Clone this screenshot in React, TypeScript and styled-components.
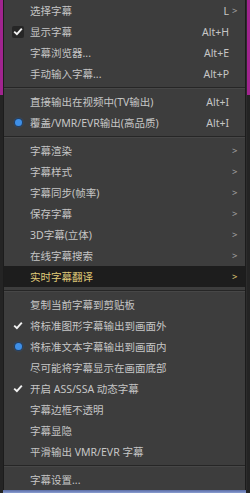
import styled, { createGlobalStyle } from 'styled-components';

type Entry =
  | { kind: 'sep' }
  | {
      kind: 'item';
      label: string;
      shortcut?: string;
      submenu?: boolean;
      mark?: 'check' | 'boxcheck' | 'radio';
      active?: boolean;
    };

const entries: Entry[] = [
  { kind: 'item', label: '选择字幕', shortcut: 'L', submenu: true },
  { kind: 'item', label: '显示字幕', shortcut: 'Alt+H', mark: 'boxcheck' },
  { kind: 'item', label: '字幕浏览器...', shortcut: 'Alt+E' },
  { kind: 'item', label: '手动输入字幕...', shortcut: 'Alt+P' },
  { kind: 'sep' },
  { kind: 'item', label: '直接输出在视频中(TV输出)', shortcut: 'Alt+I' },
  { kind: 'item', label: '覆盖/VMR/EVR输出(高品质)', shortcut: 'Alt+I', mark: 'radio' },
  { kind: 'sep' },
  { kind: 'item', label: '字幕渲染', submenu: true },
  { kind: 'item', label: '字幕样式', submenu: true },
  { kind: 'item', label: '字幕同步(帧率)', submenu: true },
  { kind: 'item', label: '保存字幕', submenu: true },
  { kind: 'item', label: '3D字幕(立体)', submenu: true },
  { kind: 'item', label: '在线字幕搜索', submenu: true },
  { kind: 'item', label: '实时字幕翻译', submenu: true, active: true },
  { kind: 'sep' },
  { kind: 'item', label: '复制当前字幕到剪贴板' },
  { kind: 'item', label: '将标准图形字幕输出到画面外', mark: 'check' },
  { kind: 'item', label: '将标准文本字幕输出到画面内', mark: 'radio' },
  { kind: 'item', label: '尽可能将字幕显示在画面底部' },
  { kind: 'item', label: '开启 ASS/SSA 动态字幕', mark: 'check' },
  { kind: 'item', label: '字幕边框不透明' },
  { kind: 'item', label: '字幕显隐' },
  { kind: 'item', label: '平滑输出 VMR/EVR 字幕' },
  { kind: 'sep' },
  { kind: 'item', label: '字幕设置...' },
];

const GlobalStyle = createGlobalStyle`
  html, body {
    margin: 0;
    padding: 0;
    background: #222222;
  }
  body {
    font-family: "Noto Sans", "Noto Sans CJK SC", sans-serif;
  }
`;

const Screen = styled.div`
  width: 250px;
  height: 493px;
  overflow: hidden;
  display: flex;
  flex-direction: column;
  background: linear-gradient(to bottom, #a1248f 0, #a1248f 95px, #242424 95px);
`;

const MenuRow = styled.div`
  display: flex;
  flex: 1;
  min-height: 0;
`;

const Menu = styled.div`
  flex: 1;
  margin: 0 4px 0 3px;
  background: #3d3d3d;
  border-left: 1px solid #1c1c1c;
  border-right: 1px solid #1c1c1c;
  box-shadow: 1px 0 0 #2c2c2c;
  display: flex;
  flex-direction: column;
  overflow: hidden;
`;

const Row = styled.div<{ $active?: boolean }>`
  height: 21px;
  flex: none;
  display: grid;
  grid-template-columns: 26px 1fr auto 10px;
  align-items: center;
  padding-right: 6px;
  font-size: 10.5px;
  color: ${(p) => (p.$active ? '#e0cc7a' : '#c6c6c6')};
  background: ${(p) => (p.$active ? '#1d1d1d' : 'transparent')};
  white-space: nowrap;
`;

const Mark = styled.div`
  display: flex;
  align-items: center;
  justify-content: center;
  padding-left: 2px;
`;

const CheckBox = styled.div<{ $boxed?: boolean }>`
  width: 12px;
  height: 12px;
  border-radius: 2px;
  background: ${(p) => (p.$boxed ? '#262626' : 'transparent')};
  display: flex;
  align-items: center;
  justify-content: center;
`;

const RadioDot = styled.div`
  width: 7px;
  height: 7px;
  border-radius: 50%;
  background: #3f8fe6;
  box-shadow: 0 0 0 1px #1f3f66, 0 0 2px 1px rgba(70, 140, 230, 0.35);
`;

const Label = styled.span`
  overflow: hidden;
`;

const Shortcut = styled.span`
  text-align: right;
  padding-left: 12px;
`;

const Arrow = styled.span<{ $active?: boolean }>`
  font-size: 9.5px;
  padding-left: 3px;
  color: ${(p) => (p.$active ? '#e0cc7a' : '#a4a4a4')};
`;

const Separator = styled.div`
  height: 7px;
  flex: none;
  display: flex;
  flex-direction: column;
  justify-content: center;
  &::before {
    content: '';
    display: block;
    height: 1px;
    background: #262626;
  }
  &::after {
    content: '';
    display: block;
    height: 1px;
    background: #474747;
  }
`;

const BottomBar = styled.div`
  height: 3px;
  flex: none;
  margin: 0 4px 0 3px;
  background: linear-gradient(to bottom, #5a6ca6, #8a9dd0);
`;

const CheckIcon = () => (
  <svg width="10" height="9" viewBox="0 0 10 9">
    <path d="M1.2 4.6 L3.9 7.2 L8.8 1.6" fill="none" stroke="#f2f2f2" strokeWidth="1.9" />
  </svg>
);

const App = () => {
  return (
    <>
      <GlobalStyle />
      <Screen>
        <MenuRow>
          <Menu>
            {entries.map((e, i) => {
              if (e.kind === 'sep') return <Separator key={i} />;
              return (
                <Row key={i} $active={e.active}>
                  <Mark>
                    {e.mark === 'radio' && <RadioDot />}
                    {(e.mark === 'check' || e.mark === 'boxcheck') && (
                      <CheckBox $boxed={e.mark === 'boxcheck'}>
                        <CheckIcon />
                      </CheckBox>
                    )}
                  </Mark>
                  <Label>{e.label}</Label>
                  <Shortcut>{e.shortcut}</Shortcut>
                  <Arrow $active={e.active}>{e.submenu ? '>' : ''}</Arrow>
                </Row>
              );
            })}
          </Menu>
        </MenuRow>
        <BottomBar />
      </Screen>
    </>
  );
};

export default App;
